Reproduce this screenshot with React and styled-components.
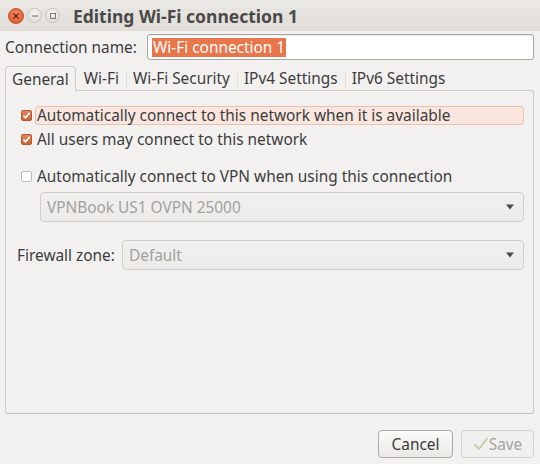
import React from "react"
import styled, { createGlobalStyle } from "styled-components"

const Global = createGlobalStyle`
  html, body {
    margin: 0;
    padding: 0;
    background: #f2f1f0;
  }
  body {
    font-family: "Noto Sans", "DejaVu Sans", sans-serif;
    font-size: 15.4px;
    color: #3c3c3c;
  }
`

const Window = styled.div`
  width: 540px;
  height: 464px;
  display: flex;
  flex-direction: column;
  background: #f2f1f0;
  overflow: hidden;
`

const TitleBar = styled.div`
  height: 31px;
  display: flex;
  align-items: center;
  padding-left: 8px;
  background: linear-gradient(#ebe9e5, #e0ddd8);
  box-sizing: border-box;
`

const WinButtons = styled.div`
  display: flex;
  align-items: center;
  gap: 3px;
  margin-right: 13px;
`

const WinBtn = styled.span`
  width: ${p => (p.close ? 16 : 15)}px;
  height: ${p => (p.close ? 16 : 15)}px;
  border-radius: 50%;
  display: flex;
  align-items: center;
  justify-content: center;
  box-sizing: border-box;
  background: ${p =>
    p.close
      ? "radial-gradient(circle at 50% 35%, #f48a62, #dd4f22)"
      : "radial-gradient(circle at 50% 35%, #f6f5f3, #d9d6d0)"};
  border: 1px solid ${p => (p.close ? "#c24a24" : "#c9c6c0")};
`

const Title = styled.div`
  font-weight: bold;
  font-size: 17.5px;
  color: #4a4a48;
`

const Body = styled.div`
  flex: 1;
  display: flex;
  flex-direction: column;
  padding: 3px 6px 6px 5px;
`

const NameRow = styled.div`
  display: flex;
  align-items: center;
  height: 26px;
`

const Label = styled.span`
  width: ${p => p.width}px;
  flex: none;
  box-sizing: border-box;
  color: #3c3c3c;
  white-space: nowrap;
`

const Entry = styled.div`
  flex: 1;
  height: 26px;
  box-sizing: border-box;
  border: 1px solid #a9a7a2;
  border-radius: 3px;
  background: #ffffff;
  display: flex;
  align-items: center;
  padding-left: 4px;
  box-shadow: inset 0 1px 1px rgba(0, 0, 0, 0.08);
`

const Selected = styled.span`
  background: #e9754a;
  color: #fff;
  padding: 0 1px;
  line-height: 19px;
`

const TabStrip = styled.div`
  display: flex;
  align-items: flex-end;
  margin-top: 6px;
  height: 24px;
  position: relative;
  z-index: 1;
`

const Tab = styled.div`
  height: ${p => (p.active ? 25 : 24)}px;
  box-sizing: border-box;
  padding: 0 ${p => (p.active ? 6 : 5)}px;
  margin-right: 2px;
  display: flex;
  align-items: center;
  white-space: nowrap;
  color: #3c3c3c;
  background: ${p => (p.active ? "#f2f1f0" : "transparent")};
  border: 1px solid ${p => (p.active ? "#cdcbc6" : "transparent")};
  border-bottom: none;
  border-radius: 4px 4px 0 0;
  margin-bottom: ${p => (p.active ? -1 : 0)}px;
  position: relative;

  & + &::before {
    content: "";
    position: absolute;
    left: -2px;
    top: 5px;
    bottom: 2px;
    width: 1px;
    background: #e2e0dc;
  }
`

const Panel = styled.div`
  height: 324px;
  box-sizing: border-box;
  border: 1px solid #cdcbc6;
  border-bottom-color: #c2c0bb;
  border-radius: 0 3px 3px 3px;
  padding: 12px 9px 0 11px;
  display: flex;
  flex-direction: column;
`

const CheckRow = styled.div`
  display: flex;
  align-items: center;
  height: ${p => p.h || 24}px;
  margin-top: ${p => p.mt || 0}px;
  gap: 3px;
  padding-left: 4px;
`

const Box = styled.span`
  width: 11px;
  height: 11px;
  flex: none;
  box-sizing: border-box;
  border-radius: 2px;
  border: 1px solid ${p => (p.checked ? "#b5562f" : "#bdbab4")};
  background: ${p => (p.checked ? "linear-gradient(#e3835a, #cf6336)" : "#fff")};
  display: flex;
  align-items: center;
  justify-content: center;
`

const CheckText = styled.span`
  flex: 1;
  height: 19px;
  line-height: 17px;
  box-sizing: border-box;
  padding-left: 1px;
  border: 1px solid ${p => (p.focus ? "#ecc0ae" : "transparent")};
  border-radius: 3px;
  background: ${p => (p.focus ? "#f9e6df" : "transparent")};
`

const Combo = styled.div`
  height: 30px;
  box-sizing: border-box;
  flex: 1;
  border: 1px solid #d0ceca;
  border-radius: 4px;
  background: linear-gradient(#f1f0ee, #ecebe8);
  display: flex;
  align-items: center;
  justify-content: space-between;
  padding: 0 8px 0 6px;
  color: #a3a19d;
`

const ComboRow = styled.div`
  display: flex;
  align-items: center;
  margin-top: ${p => p.mt || 0}px;
  padding-left: ${p => p.indent || 0}px;
`

const Footer = styled.div`
  margin-top: auto;
  display: flex;
  justify-content: flex-end;
  gap: 8px;
`

const Button = styled.div`
  height: 28px;
  width: ${p => p.w}px;
  box-sizing: border-box;
  border: 1px solid ${p => (p.disabled ? "#d4d2cd" : "#aeaba6")};
  border-radius: 4px;
  background: ${p => (p.disabled ? "#f1f0ee" : "linear-gradient(#fbfbfa, #e9e8e5)")};
  display: flex;
  align-items: center;
  justify-content: center;
  gap: 0;
  color: ${p => (p.disabled ? "#a5a39f" : "#3c3c3c")};
`

const Arrow = () => (
  <svg width="10" height="6" viewBox="0 0 10 6">
    <path d="M1 0.5 L9 0.5 L5 5.5 Z" fill="#4a4a48" />
  </svg>
)

const Tick = () => (
  <svg width="9" height="9" viewBox="0 0 9 9">
    <path d="M1.5 4.6 L3.6 6.8 L7.6 1.8" fill="none" stroke="#fff" strokeWidth="1.7" />
  </svg>
)

const Check = ({ checked, focus, children, h, mt }) => (
  <CheckRow h={h} mt={mt}>
    <Box checked={checked}>{checked && <Tick />}</Box>
    <CheckText focus={focus}>{children}</CheckText>
  </CheckRow>
)

export default function App() {
  return (
    <Window>
      <Global />
      <TitleBar>
        <WinButtons>
          <WinBtn close>
            <svg width="8" height="8" viewBox="0 0 8 8">
              <path d="M1.5 1.5 L6.5 6.5 M6.5 1.5 L1.5 6.5" stroke="#6b2410" strokeWidth="1.4" />
            </svg>
          </WinBtn>
          <WinBtn>
            <svg width="8" height="8" viewBox="0 0 8 8">
              <path d="M1 4 L7 4" stroke="#7a7873" strokeWidth="1.2" />
            </svg>
          </WinBtn>
          <WinBtn>
            <svg width="8" height="8" viewBox="0 0 8 8">
              <rect x="1.5" y="1.5" width="5" height="5" fill="none" stroke="#7a7873" strokeWidth="1" />
            </svg>
          </WinBtn>
        </WinButtons>
        <Title>Editing Wi-Fi connection 1</Title>
      </TitleBar>
      <Body>
        <NameRow>
          <Label width={142}>Connection name:</Label>
          <Entry>
            <Selected>Wi-Fi connection 1</Selected>
          </Entry>
        </NameRow>
        <TabStrip>
          <Tab active>General</Tab>
          <Tab>Wi-Fi</Tab>
          <Tab>Wi-Fi Security</Tab>
          <Tab>IPv4 Settings</Tab>
          <Tab>IPv6 Settings</Tab>
        </TabStrip>
        <Panel>
          <Check checked focus>
            Automatically connect to this network when it is available
          </Check>
          <Check checked>
            All users may connect to this network
          </Check>
          <Check mt={12} h={26}>
            Automatically connect to VPN when using this connection
          </Check>
          <ComboRow indent={23} mt={3}>
            <Combo>
              <span>VPNBook US1 OVPN 25000</span>
              <Arrow />
            </Combo>
          </ComboRow>
          <ComboRow mt={18}>
            <Label width={105}>Firewall zone:</Label>
            <Combo>
              <span>Default</span>
              <Arrow />
            </Combo>
          </ComboRow>
        </Panel>
        <Footer>
          <Button w={75}>Cancel</Button>
          <Button w={73} disabled>
            <svg width="16" height="14" viewBox="0 0 16 14">
              <path d="M2 8 L6 12 L14 1.5" fill="none" stroke="#c3cfa6" strokeWidth="2" strokeLinecap="round" strokeLinejoin="round" />
            </svg>
            Save
          </Button>
        </Footer>
      </Body>
    </Window>
  )
}
